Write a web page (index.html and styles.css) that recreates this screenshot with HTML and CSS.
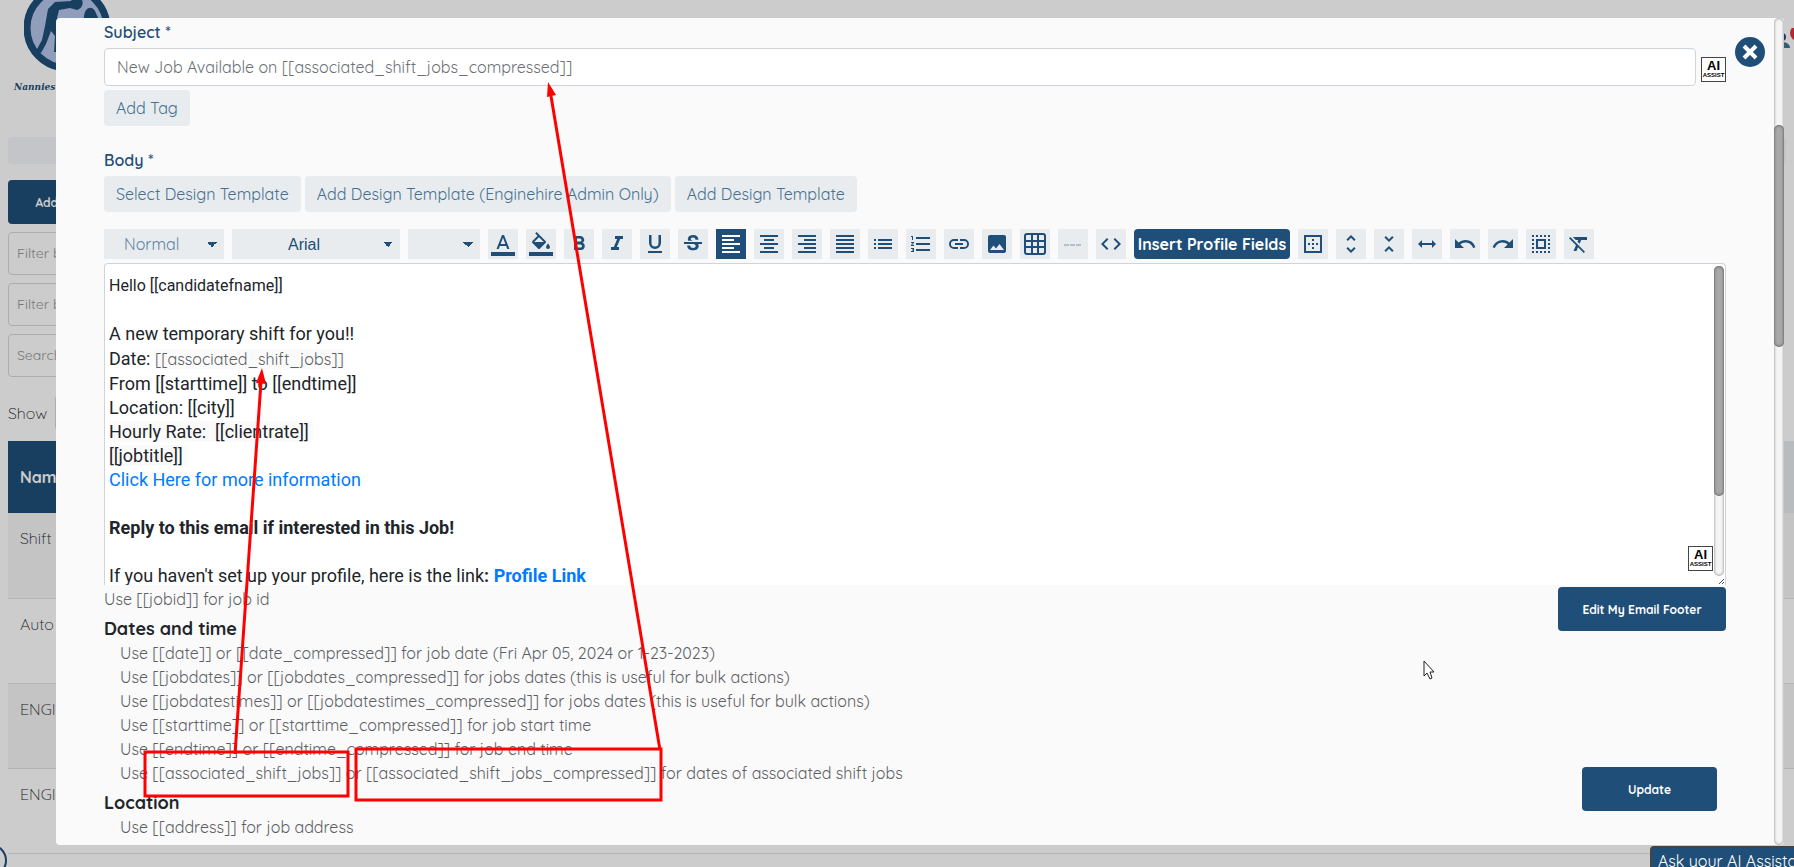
FILE: index.html
```html
<!DOCTYPE html>
<html lang="en">
<head>
    <meta charset="UTF-8">
    <meta name="viewport" content="width=device-width, initial-scale=1.0">
    <title>Edit Email Template</title>
    <link rel="stylesheet" href="styles.css">
</head>
<body>
    <div class="page">
        <div class="logo">
            <svg width="86" height="86" viewBox="0 0 86 86" aria-hidden="true">
                <circle cx="43" cy="43" r="40" fill="#b4c5ea" stroke="#1f4f78" stroke-width="7"/>
                <path d="M31 17l16-1c2-4 9-5 11-1 2 5-1 9-5 10l-7-2-11 2-2 8c5 3 6 11 5 17l-3 17h-5l1-16-4-5-5 13-5 9-5-2 6-11 3-14 3-17z" fill="#1f4f78"/>
                <path d="M60 31c1-8 7-11 11-5l4 9 4 16-20-10z" fill="#1f4f78"/>
            </svg>
            <span class="logo-name">Nannies and More</span>
        </div>
        <div class="page-tabs"></div>
        <button class="btn page-add">Add New</button>
        <div class="filters">
            <input type="text" class="filter" placeholder="Filter by Type" aria-label="Filter by type">
            <input type="text" class="filter" placeholder="Filter by Status" aria-label="Filter by status">
            <input type="search" class="filter" placeholder="Search" aria-label="Search">
        </div>
        <label class="show-row">Show <select class="show-select"><option>25</option></select></label>
        <table class="template-table">
            <thead>
                <tr><th>Name</th><th class="actions"></th></tr>
            </thead>
            <tbody>
                <tr><td>Shift</td><td></td></tr>
                <tr><td>Auto</td><td></td></tr>
                <tr><td>ENGINE</td><td></td></tr>
                <tr><td>ENGINE</td><td></td></tr>
            </tbody>
        </table>
        <svg class="user-icon" width="12" height="24" viewBox="0 0 12 24" aria-hidden="true">
            <circle cx="0" cy="9" r="4" fill="#1f4f78"/>
            <path d="M-8 20c0-4 4-6 8-6s8 2 8 6z" fill="#4a7397"/>
            <circle cx="16" cy="5" r="8" fill="#dc3545"/>
        </svg>
        <div class="help-ring"></div>
    </div>

    <div class="overlay"></div>

    <div class="modal" role="dialog" aria-label="Edit email template">
        <div class="modal-content">
            <label class="field-label" for="subject">Subject *</label>
            <div class="subject-row">
                <input type="text" id="subject" class="subject-input" value="New Job Available on [[associated_shift_jobs_compressed]]">
                <button class="ai-btn"><b>AI</b><span>ASSIST</span></button>
            </div>
            <button class="btn-light">Add Tag</button>

            <label class="field-label body-label" for="editor">Body *</label>
            <div class="template-buttons">
                <button class="btn-light">Select Design Template</button>
                <button class="btn-light">Add Design Template (Enginehire Admin Only)</button>
                <button class="btn-light">Add Design Template</button>
            </div>

            <div class="toolbar">
                <select class="tool-select select-format" aria-label="Format"><option>Normal</option></select>
                <select class="tool-select select-font" aria-label="Font"><option>Arial</option></select>
                <select class="tool-select select-size" aria-label="Size"><option></option></select>
                <button class="tool" aria-label="Text color"><svg viewBox="0 0 24 24"><path d="M0 20h24v4H0z"/><path d="M11 3 5.500 17h2.250l1.120-3h6.250l1.120 3h2.250L13 3h-2zm-1.380 9L12 5.670 14.380 12H9.620z"/></svg></button>
                <button class="tool" aria-label="Fill color"><svg viewBox="0 0 24 24"><path d="M16.560 8.940 7.620 0 6.210 1.410l2.380 2.380-5.150 5.150a1.490 1.490 0 0 0 0 2.120l5.500 5.500a1.500 1.500 0 0 0 2.120 0l5.500-5.500c.59-.58.59-1.530 0-2.120zM5.210 10 10 5.210 14.790 10H5.210zM19 11.500s-2 2.170-2 3.500a2 2 0 0 0 4 0c0-1.330-2-3.500-2-3.500zM0 20h24v4H0z"/></svg></button>
                <button class="tool" aria-label="Bold"><svg viewBox="0 0 24 24"><path d="M15.600 10.790c.97-.67 1.650-1.770 1.650-2.790 0-2.260-1.750-4-4-4H7v14h7.040c2.090 0 3.710-1.700 3.710-3.790 0-1.520-.86-2.820-2.150-3.420zM10 6.500h3a1.500 1.500 0 0 1 0 3h-3v-3zm3.500 9H10v-3h3.500a1.500 1.500 0 0 1 0 3z"/></svg></button>
                <button class="tool" aria-label="Italic"><svg viewBox="0 0 24 24"><path d="M10 4v3h2.210l-3.420 8H6v3h8v-3h-2.210l3.420-8H18V4z"/></svg></button>
                <button class="tool" aria-label="Underline"><svg viewBox="0 0 24 24"><path d="M12 17a6 6 0 0 0 6-6V3h-2.500v8a3.500 3.500 0 0 1-7 0V3H6v8a6 6 0 0 0 6 6zm-7 2v2h14v-2H5z"/></svg></button>
                <button class="tool" aria-label="Strikethrough"><svg viewBox="0 0 24 24"><path d="M7.240 8.750C6.300 6.900 7 3 12 3c3.500 0 5.400 2 5.400 4.700h-3c0-1.500-.9-2.300-2.400-2.300-2.200 0-2.900 1.700-1.600 2.700.4.300.9.500 1.300.65H7.240zM21 12v-2H3v2h9.620c1.100.45 2.100.9 2.100 2.050 0 1.100-.9 1.850-2.620 1.850-1.900 0-2.900-.9-2.900-2.500H6.200C6.200 16.700 8.700 18.300 12.100 18.300c3.300 0 5.600-1.650 5.600-4.300 0-.75-.17-1.400-.47-2H21z"/></svg></button>
                <button class="tool active" aria-label="Align left"><svg viewBox="0 0 24 24"><path d="M15 15H3v2h12v-2zm0-8H3v2h12V7zM3 13h18v-2H3v2zm0 8h18v-2H3v2zM3 3v2h18V3H3z"/></svg></button>
                <button class="tool" aria-label="Align center"><svg viewBox="0 0 24 24"><path d="M7 15v2h10v-2H7zm-4 6h18v-2H3v2zm0-8h18v-2H3v2zm4-6v2h10V7H7zM3 3v2h18V3H3z"/></svg></button>
                <button class="tool" aria-label="Align right"><svg viewBox="0 0 24 24"><path d="M3 21h18v-2H3v2zm6-4h12v-2H9v2zm-6-4h18v-2H3v2zm6-4h12V7H9v2zM3 3v2h18V3H3z"/></svg></button>
                <button class="tool" aria-label="Justify"><svg viewBox="0 0 24 24"><path d="M3 21h18v-2H3v2zm0-4h18v-2H3v2zm0-4h18v-2H3v2zm0-4h18V7H3v2zm0-6v2h18V3H3z"/></svg></button>
                <button class="tool" aria-label="Bullet list"><svg viewBox="0 0 24 24"><path d="M3 13h2v-2H3v2zm0 4h2v-2H3v2zm0-8h2V7H3v2zm4 4h14v-2H7v2zm0 4h14v-2H7v2zM7 7v2h14V7H7z"/></svg></button>
                <button class="tool" aria-label="Numbered list"><svg viewBox="0 0 24 24"><path d="M2 17h2v.5H3v1h1v.5H2v1h3v-4H2v1zm1-9h1V4H2v1h1v3zm-1 3h1.800L2 13.100v.9h3v-1H3.200L5 10.900V10H2v1zm5-6v2h14V5H7zm0 14h14v-2H7v2zm0-6h14v-2H7v2z"/></svg></button>
                <button class="tool" aria-label="Link"><svg viewBox="0 0 24 24"><path d="M3.900 12A3.100 3.100 0 0 1 7 8.900h4V7H7a5 5 0 0 0 0 10h4v-1.900H7A3.100 3.100 0 0 1 3.900 12zM8 13h8v-2H8v2zm9-6h-4v1.900h4a3.100 3.100 0 0 1 0 6.200h-4V17h4a5 5 0 0 0 0-10z"/></svg></button>
                <button class="tool" aria-label="Image"><svg viewBox="0 0 24 24"><path d="M21 19V5a2 2 0 0 0-2-2H5a2 2 0 0 0-2 2v14a2 2 0 0 0 2 2h14a2 2 0 0 0 2-2zM8.500 13.500l2.500 3.010L14.500 12l4.500 6H5l3.500-4.500z"/></svg></button>
                <button class="tool" aria-label="Table"><svg viewBox="0 0 24 24"><path fill="none" stroke="currentColor" stroke-width="2" d="M4 2h16a2 2 0 0 1 2 2v16a2 2 0 0 1-2 2H4a2 2 0 0 1-2-2V4a2 2 0 0 1 2-2zM2 9h20M2 15h20M9 2v20M15 2v20"/></svg></button>
                <button class="tool faded" aria-label="Horizontal line"><svg viewBox="0 0 24 24"><path d="M3 12h5v2H3zm6 0h5v2H9zm6 0h5v2h-5z"/></svg></button>
                <button class="tool" aria-label="Code view"><svg viewBox="0 0 24 24"><path d="M9.400 16.600 4.800 12l4.600-4.600L8 6l-6 6 6 6 1.400-1.400zm5.200 0 4.600-4.600-4.600-4.600L16 6l6 6-6 6-1.400-1.400z"/></svg></button>
                <button class="btn insert-btn">Insert Profile Fields</button>
                <button class="tool" aria-label="Table border"><svg viewBox="0 0 24 24"><path d="M13 7h-2v2h2V7zm0 4h-2v2h2v-2zm4 0h-2v2h2v-2zM3 3v18h18V3H3zm16 16H5V5h14v14zm-6-4h-2v2h2v-2zm-4-4H7v2h2v-2z"/></svg></button>
                <button class="tool" aria-label="Expand"><svg viewBox="0 0 24 24"><path d="M12 5.830 15.170 9l1.410-1.410L12 3 7.410 7.590 8.830 9 12 5.830zm0 12.340L8.830 15l-1.410 1.410L12 21l4.590-4.590L15.170 15 12 18.170z"/></svg></button>
                <button class="tool" aria-label="Collapse"><svg viewBox="0 0 24 24"><path d="M7.410 18.590 8.830 20 12 16.830 15.170 20l1.410-1.410L12 14l-4.590 4.590zm9.180-13.180L15.170 4 12 7.170 8.830 4 7.410 5.410 12 10l4.590-4.590z"/></svg></button>
                <button class="tool" aria-label="Full width"><svg viewBox="0 0 24 24"><path d="m7 8-4 4 4 4v-3h10v3l4-4-4-4v3H7z"/></svg></button>
                <button class="tool" aria-label="Undo"><svg viewBox="0 0 24 24"><path d="M12.500 8c-2.650 0-5.050.99-6.900 2.600L2 7v9h9l-3.620-3.620A8 8 0 0 1 20.080 16l2.370-.78A10.500 10.500 0 0 0 12.500 8z"/></svg></button>
                <button class="tool" aria-label="Redo"><svg viewBox="0 0 24 24"><path d="M18.400 10.600A10.500 10.500 0 0 0 1.540 15.220L3.900 16a8 8 0 0 1 12.700-3.620L13 16h9V7l-3.600 3.600z"/></svg></button>
                <button class="tool" aria-label="Select all"><svg viewBox="0 0 24 24"><path d="M3 5h2V3H3v2zm0 8h2v-2H3v2zm4 8h2v-2H7v2zM3 9h2V7H3v2zm10-6h-2v2h2V3zm6 0v2h2V3h-2zM3 21h2v-2H3v2zm0-4h2v-2H3v2zM9 3H7v2h2V3zm2 18h2v-2h-2v2zm8-8h2v-2h-2v2zm0 8h2v-2h-2v2zm0-12h2V7h-2v2zm0 8h2v-2h-2v2zm-4 4h2v-2h-2v2zm0-16h2V3h-2v2zM7 17h10V7H7v10zm2-8h6v6H9V9z"/></svg></button>
                <button class="tool" aria-label="Clear formatting"><svg viewBox="0 0 24 24"><path d="M3.270 5 2 6.270l6.970 6.970L6.500 19h3l1.570-3.660L16.730 21 18 19.730 3.550 5.270 3.270 5zM6 5v.18L8.820 8h2.400l-.72 1.680 2.100 2.100L14.210 8H20V5H6z"/></svg></button>
            </div>

            <div class="editor-wrap">
                <div class="editor" id="editor" contenteditable="true" role="textbox" aria-label="Body">
                    <p class="small">Hello [[candidatefname]]</p>
                    <p><br></p>
                    <p>A new temporary shift for you!!</p>
                    <p class="date-line">Date: <span class="tag">[[associated_shift_jobs]]</span></p>
                    <p>From [[starttime]] to [[endtime]]</p>
                    <p>Location: [[city]]</p>
                    <p><span class="marked">Hourly Rate:&nbsp; [[clientrate]]&nbsp;</span></p>
                    <p><span class="marked">[[jobtitle]]&nbsp;</span></p>
                    <p><a href="#">Click Here for more information</a></p>
                    <p><br></p>
                    <p><b>Reply to this email if interested in this Job!</b></p>
                    <p><br></p>
                    <p>If you haven't set up your profile, here is the link<b>: <a href="#">Profile Link</a></b></p>
                </div>
                <div class="editor-side">
                    <div class="track"><div class="thumb"></div></div>
                    <svg class="grip" width="11" height="9" viewBox="0 0 11 9" aria-hidden="true"><path d="M5 8l5-5M8 8l2-2" stroke="#555"/></svg>
                </div>
                <button class="ai-btn editor-ai"><b>AI</b><span>ASSIST</span></button>
            </div>

            <div class="below-editor">
                <div class="help">
                    <p>Use [[jobid]] for job id</p>
                    <h4>Dates and time</h4>
                    <ul>
                        <li>Use [[date]] or [[date_compressed]] for job date (Fri Apr 05, 2024 or 1-23-2023)</li>
                        <li>Use [[jobdates]] or [[jobdates_compressed]] for jobs dates (this is useful for bulk actions)</li>
                        <li>Use [[jobdatestimes]] or [[jobdatestimes_compressed]] for jobs dates (this is useful for bulk actions)</li>
                        <li>Use [[starttime]] or [[starttime_compressed]] for job start time</li>
                        <li>Use [[endtime]] or [[endtime_compressed]] for job end time</li>
                        <li>Use [[associated_shift_jobs]] or [[associated_shift_jobs_compressed]] for dates of associated shift jobs</li>
                    </ul>
                    <h4>Location</h4>
                    <ul>
                        <li>Use [[address]] for job address</li>
                    </ul>
                </div>
                <button class="btn footer-btn">Edit My Email Footer</button>
            </div>
        </div>
        <div class="track modal-track"><div class="thumb"></div></div>
        <button class="close-btn" aria-label="Close"><svg width="16" height="16" viewBox="0 0 16 16"><path d="M2 2l12 12M14 2L2 14" stroke="#fff" stroke-width="4"/></svg></button>
        <button class="btn update-btn">Update</button>
    </div>

    <button class="ask-ai">Ask your AI Assistant</button>

    <svg class="annotations" width="1794" height="867" viewBox="0 0 1794 867" aria-hidden="true">
        <g fill="none" stroke="#f00" stroke-width="3">
            <rect x="145" y="752" width="203" height="44"/>
            <rect x="356" y="749" width="305" height="51"/>
            <path d="M235 754L261 382M660 750L551 96"/>
        </g>
        <path d="M262 368l-6 15 10 1zM548 82l-1 15 9-2z" fill="#f00"/>
    </svg>
    <svg class="cursor" width="13" height="20" viewBox="0 0 13 20" aria-hidden="true"><path d="M1 1v15l3-3 3 6 2-1-2-6h4z" fill="#fff" stroke="#222"/></svg>
</body>
</html>
```

FILE: styles.css
```css
* {
    box-sizing: border-box;
}
body {
    margin: 0;
    height: 100vh;
    overflow: hidden;
    background-color: #fff;
    color: #212529;
    font-family: Quicksand, Lato, sans-serif;
    font-size: 16px;
    font-weight: 300;
    line-height: 24px;
}
button, input, select {
    font-family: inherit;
    font-size: 16px;
    font-weight: 400;
}
button {
    cursor: pointer;
    padding: 0;
    border: none;
}
p, h4, ul {
    margin: 0;
    padding: 0;
    list-style: none;
}
.btn {
    height: 44px;
    background-color: #1f4f78;
    color: #fff;
    border-radius: 4px;
    font-size: 12px;
    font-weight: 700;
}

/* Page behind the dialog */
.page {
    padding: 0 8px;
}
.logo {
    display: flex;
    flex-direction: column;
    width: 140px;
    height: 137px;
    margin-top: -15px;
    padding-left: 6px;
}
.logo svg {
    margin-left: 10px;
}
.logo-name {
    font-family: "DejaVu Serif", serif;
    font-size: 9px;
    font-style: italic;
    font-weight: 700;
    color: #1f4f78;
    margin-top: 4px;
    white-space: nowrap;
}
.page-tabs {
    height: 27px;
    margin-top: 15px;
    background-color: #f5f7fa;
    border-radius: 4px;
}
.page-add {
    width: 106px;
    margin: 16px 0 8px;
}
.filters {
    display: flex;
    flex-direction: column;
    gap: 8px;
}
.filter {
    width: 300px;
    height: 43px;
    padding: 0 8px 2px;
    border: 1px solid #d9d9d9;
    border-radius: 4px;
    font-size: 14px;
}
.filter::placeholder {
    color: #999;
}
.show-row {
    display: flex;
    align-items: center;
    gap: 8px;
    height: 36px;
    margin: 18px 0 10px;
}
.show-select {
    width: 70px;
    height: 36px;
    border: 1px solid #d9d9d9;
    border-radius: 4px;
    background-color: #fff;
}
.template-table {
    width: calc(100% + 8px);
    border-collapse: collapse;
}
.template-table th {
    height: 72px;
    padding: 0 12px;
    background-color: #1f4f78;
    color: #fff;
    text-align: left;
}
.template-table .actions {
    width: 200px;
    background-color: #e8ecef;
}
.template-table td {
    height: 85px;
    padding: 13px 12px;
    vertical-align: top;
    border-bottom: 1px solid #dee2e6;
}
.template-table tr:nth-child(odd) td {
    background-color: #f5f6f7;
}
.user-icon {
    position: absolute;
    top: 28px;
    right: 0;
}
.help-ring {
    position: absolute;
    left: -26px;
    bottom: -10px;
    width: 33px;
    height: 33px;
    border: 2px solid #1f4f78;
    border-radius: 50%;
}
.overlay {
    position: fixed;
    inset: 0;
    background-color: rgba(0, 0, 0, 0.2);
}

/* Dialog */
.modal {
    position: fixed;
    inset: 18px 10px 22px 56px;
    display: flex;
    background-color: #fafafa;
    border-radius: 4px;
}
.modal-content {
    flex: 1;
    padding: 2px 48px 0;
    overflow: hidden;
}
.field-label {
    display: block;
    height: 28px;
    color: #1f4f78;
    font-weight: 600;
}
.body-label {
    margin-top: 22px;
}
.subject-row {
    display: flex;
    align-items: center;
    gap: 5px;
    margin-bottom: 4px;
}
.subject-input {
    flex: 1;
    height: 38px;
    padding: 0 12px;
    border: 1px solid #ced4da;
    border-radius: 4px;
    background-color: #fff;
    color: #6a7075;
}
.ai-btn {
    display: flex;
    flex-direction: column;
    align-items: center;
    justify-content: center;
    width: 25px;
    height: 25px;
    margin-top: 4px;
    border: 1px solid #444;
    background-color: #fff;
    color: #000;
    font-family: "Liberation Sans", Arial, sans-serif;
}
.ai-btn b {
    font-size: 13px;
    line-height: 12px;
}
.ai-btn span {
    font-size: 6px;
    font-weight: 700;
    line-height: 7px;
}
.btn-light {
    height: 36px;
    padding: 0 12px;
    border-radius: 4px;
    background-color: #e8ecef;
    color: #45708f;
}
.template-buttons {
    display: flex;
    gap: 4px;
    margin-bottom: 17px;
}
.toolbar {
    display: flex;
    flex-wrap: wrap;
    gap: 8px;
    margin-bottom: 4px;
}
.tool {
    width: 30px;
    height: 30px;
    padding: 3px;
    background-color: #e8ecef;
    color: #1f4f78;
}
.tool svg {
    display: block;
    width: 24px;
    height: 24px;
    fill: currentColor;
}
.tool.active {
    background-color: #1f4f78;
    color: #fff;
}
.tool.faded {
    color: #b3c0cc;
}
.tool-select {
    height: 30px;
    padding: 0 20px;
    border: none;
    border-radius: 0;
    appearance: none;
    background-color: #e8ecef;
    background-image: linear-gradient(to bottom left, #1f4f78 50%, transparent 50%), linear-gradient(to bottom right, #1f4f78 50%, transparent 50%);
    background-repeat: no-repeat;
    background-size: 5px 5px;
    background-position: right 12px top 13px, right 7px top 13px;
    color: #1f4f78;
}
.select-format {
    width: 120px;
    color: #5f839f;
}
.select-font {
    width: 168px;
    padding: 0 56px;
    font-family: "Liberation Sans", Arial, sans-serif;
}
.select-size {
    width: 72px;
}
.insert-btn {
    height: 30px;
    width: 156px;
    font-size: 16px;
}

/* Editor */
.editor-wrap {
    position: relative;
    display: flex;
    height: 322px;
    overflow: hidden;
    background-color: #fff;
    border: 1px solid #ced4da;
    border-bottom: none;
    border-radius: 4px 4px 0 0;
}
.editor {
    flex: 1;
    padding: 10px 4px;
    font-family: Roboto, sans-serif;
    font-size: 18px;
    font-weight: 400;
    outline: none;
}
.editor .small {
    font-size: 16px;
}
.editor a {
    color: #007bff;
    text-decoration: none;
}
.editor .date-line {
    line-height: 26px;
}
.tag {
    font-family: Quicksand, Lato, sans-serif;
    font-size: 16px;
    color: #5c6064;
    background-color: #fafafa;
}
.marked {
    background-color: #fafafa;
}
.editor-side {
    display: flex;
    flex-direction: column;
    justify-content: space-between;
    padding-top: 2px;
}
.editor-side .track {
    height: 310px;
}
.editor-side .thumb {
    height: 230px;
}
.editor-ai {
    position: absolute;
    right: 12px;
    bottom: 14px;
}
.track {
    width: 10px;
    border-radius: 5px;
    background-color: #f5f5f5;
    box-shadow: inset 0 0 3px rgba(0, 0, 0, 0.5);
}
.thumb {
    border-radius: 5px;
    background-color: #a8a8a8;
    box-shadow: inset 0 0 3px rgba(0, 0, 0, 0.6);
}

/* Help text under the editor */
.below-editor {
    display: flex;
    justify-content: space-between;
    align-items: flex-start;
}
.help {
    padding-top: 2px;
    font-weight: 400;
    color: #5c6064;
}
.help h4 {
    margin-top: 6px;
    color: #212529;
    font-size: 18px;
    font-weight: 700;
    line-height: 24px;
}
.help ul {
    padding-left: 16px;
}
.footer-btn {
    width: 168px;
    margin-top: 2px;
}
.modal-track {
    height: 100%;
}
.modal-track .thumb {
    height: 222px;
    margin-top: 107px;
}
.close-btn {
    position: absolute;
    top: 19px;
    right: 19px;
    display: flex;
    align-items: center;
    justify-content: center;
    width: 30px;
    height: 30px;
    border-radius: 50%;
    background-color: #1f4f78;
}
.update-btn {
    position: absolute;
    right: 67px;
    bottom: 34px;
    width: 135px;
}
.ask-ai {
    position: fixed;
    right: -24px;
    bottom: -10px;
    height: 31px;
    width: 168px;
    padding: 0 6px 2px;
    border: 2px solid #444;
    border-radius: 4px;
    background-color: #1f4f78;
    color: #fff;
    text-align: left;
    white-space: nowrap;
}

/* Markup drawn over the screen */
.annotations {
    position: absolute;
    top: 0;
    left: 0;
}
.cursor {
    position: absolute;
    top: 660px;
    left: 1423px;
}
```
